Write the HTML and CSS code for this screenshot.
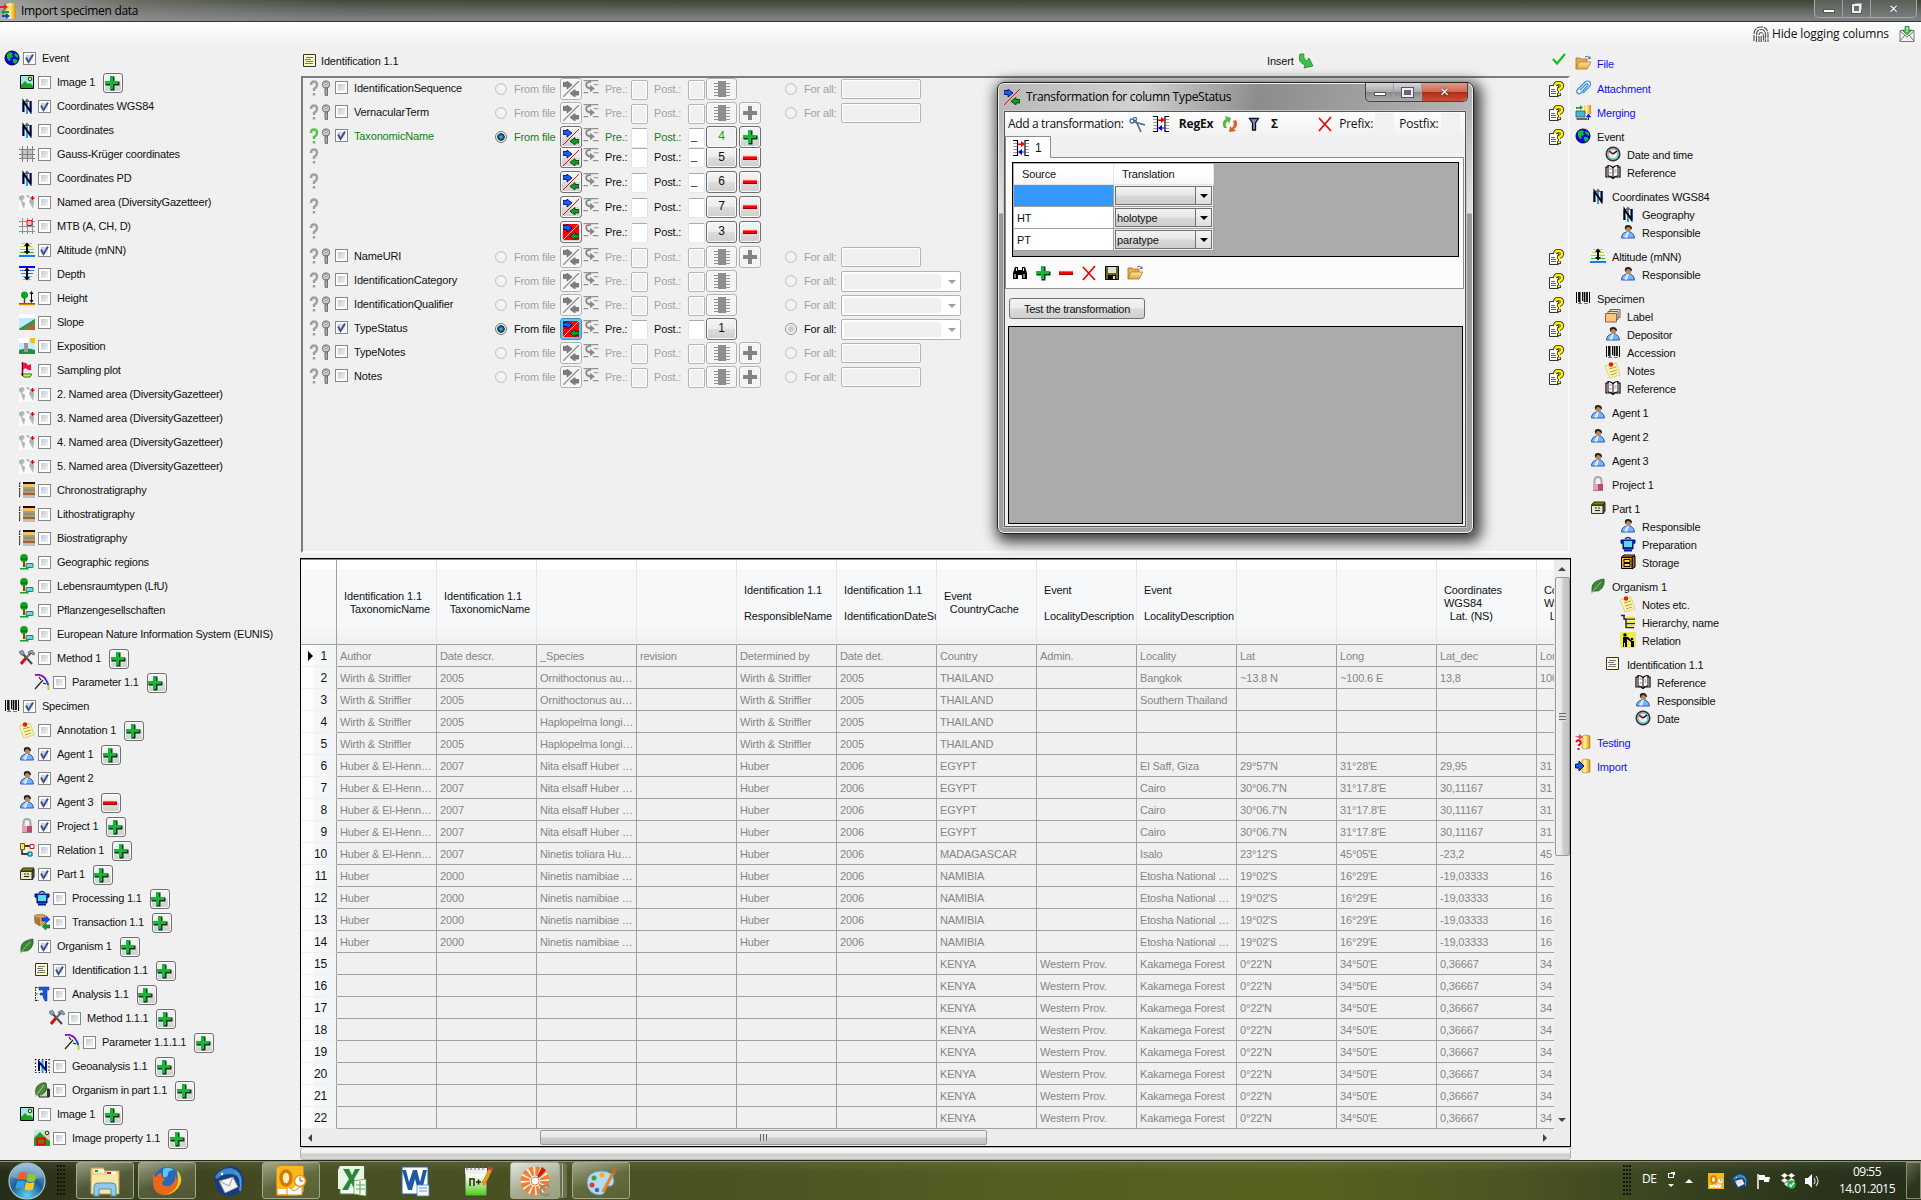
FILE: index.html
```html
<!DOCTYPE html>
<html lang="en">
<head>
<meta charset="utf-8">
<title>Import specimen data</title>
<link rel="stylesheet" href="styles.css">
</head>
<body>
<svg class="sprite" aria-hidden="true">
  <defs>
    <linearGradient id="g-gold" x1="0" x2="1"><stop offset="0" stop-color="#ffd24a"/><stop offset=".4" stop-color="#fff0a0"/><stop offset="1" stop-color="#d68a00"/></linearGradient>
    <linearGradient id="g-fold" x1="0" y1="0" x2="0" y2="1"><stop offset="0" stop-color="#ffe9a3"/><stop offset="1" stop-color="#e2a63c"/></linearGradient>
    <radialGradient id="g-orb" cx=".5" cy=".9" r=".9"><stop offset="0" stop-color="#5fd0f5"/><stop offset=".5" stop-color="#1b5e95"/><stop offset="1" stop-color="#8fb4cc"/></radialGradient>
    <linearGradient id="g-npp" x1="0" y1="0" x2="0" y2="1"><stop offset=".3" stop-color="#f8ffe8"/><stop offset="1" stop-color="#48c810"/></linearGradient>
  </defs>
  <symbol id="i-globe" viewBox="0 0 16 16"><circle cx="8" cy="8" r="7" fill="#0000e8" stroke="#000060"/><path d="M3 4l3-2 3 1-1 2 1 2-3 1 1 2-2 1-2-3zM11 3l3 2v3l-2-1-2-2zM9 9l3 0 2 2-3 3-2-2z" fill="#10c020"/></symbol>
  <symbol id="i-image" viewBox="0 0 16 16"><path d="M1.500 1.500h13v13h-13z" fill="#a0e8e8" stroke="#000"/><path d="M2 14v-3l4-4 3 3 2-1 3 3v2z" fill="#20a020"/><circle cx="11" cy="5" r="1.800" fill="#ff0" stroke="#000" stroke-width=".8"/></symbol>
  <symbol id="i-north" viewBox="0 0 16 16"><path d="M8 3v13" stroke="#20a0f0" stroke-width="2"/><path d="M5 4l3-3.500L11 4z" fill="#666"/><path d="M4.500 14V3.500l7 10V3" fill="none" stroke="#000" stroke-width="2"/><path d="M3.500 14V4M12.500 3v11" stroke="#2040d0"/></symbol>
  <symbol id="i-grid" viewBox="0 0 16 16"><path d="M2 3h12v10H2z" fill="#c4c4c4"/><path d="M3.500 0v16M8.500 0v16M13.500 0v16M0 3.500h16M0 8.500h16M0 12.500h16" stroke="#808080"/></symbol>
  <symbol id="i-map" viewBox="0 0 16 16"><path d="M0 0h16v16H0z" fill="#fafafa"/><path d="M0 2l4-1 2 2-3 4 3 2-1 6-2-4-1-4-2-2zM7 1h3l1 3-3-1zM11 5l4 1v3l-1 6-2-4-2-3z" fill="#b4b4b4"/><path d="M13.500 2v4M11.500 4h4" stroke="#e00" stroke-width="1.500"/></symbol>
  <symbol id="i-mtb" viewBox="0 0 16 16"><path d="M3.500 0v16M8.500 0v16M13.500 0v16M0 3.500h16M0 8.500h16M0 13.500h16" stroke="#909090"/><path d="M8 2.500h5v5H8z" fill="#ccc" stroke="#f00"/></symbol>
  <symbol id="i-altitude" viewBox="0 0 16 16"><path d="M3 1.500h10" stroke="#e8c020"/><path d="M2 4.500h12" stroke="#d8d820"/><path d="M1 7.500h14" stroke="#a0d820"/><path d="M1 10.500h14" stroke="#30b030"/><path d="M0 14h16" stroke="#1080f0" stroke-width="2"/><path d="M8 2v9" stroke="#000" stroke-width="2"/><path d="M5 4l3-3.500L11 4zM5 9l3 3.500L11 9z"/></symbol>
  <symbol id="i-depth" viewBox="0 0 16 16"><path d="M0 1h16" stroke="#0000f0" stroke-width="2"/><path d="M1 4.500h14M2 7.500h12" stroke="#3070f0"/><path d="M3 10.500h10M4 13.500h8" stroke="#60b8ff"/><path d="M8 3v9" stroke="#000" stroke-width="2"/><path d="M5 5l3-3.500L11 5zM5 11l3 3.500 3-3.500z"/></symbol>
  <symbol id="i-height" viewBox="0 0 16 16"><path d="M0 14h16" stroke="#b05000" stroke-width="2"/><path d="M0 14.800h16" stroke="#f0a000"/><path d="M5.500 8v5" stroke="#803000" stroke-width="1.500"/><circle cx="5.500" cy="5" r="3.500" fill="#10a030"/><path d="M12.500 3v8" stroke="#000"/><path d="M10.500 4l2-3 2 3zM10.500 10l2 3 2-3z"/></symbol>
  <symbol id="i-slope" viewBox="0 0 16 16"><path d="M0 0h16v4H0z" fill="#fff"/><path d="M0 4h16v8l-16 3z" fill="#c0e8ff"/><path d="M0 15L16 5v11H0z" fill="#a06840"/><path d="M0 15L16 5v3L4 15z" fill="#20a040"/></symbol>
  <symbol id="i-expo" viewBox="0 0 16 16"><path d="M0 0h16v16H0z" fill="#c4ecff"/><path d="M0 0h10v5H0z" fill="#fff"/><circle cx="14" cy="2.500" r="3" fill="#ffc000"/><path d="M0 12q8-3 16 0v4H0z" fill="#209040"/><path d="M5 5h4v9H5z" fill="#999"/></symbol>
  <symbol id="i-plot" viewBox="0 0 16 16"><path d="M2 12l3 3h6l2-3z" fill="#f0f020" stroke="#208020"/><path d="M3.500 0v14" stroke="#700020" stroke-width="1.500"/><path d="M4 1q3-1 4 1t4 0v6q-2 1-4-1t-4 1z" fill="#f01050"/></symbol>
  <symbol id="i-strata" viewBox="0 0 16 16"><path d="M4 0h12v2H4z" fill="#111"/><path d="M4 2h12v3H4z" fill="#f8c060"/><path d="M4 5h12v6H4z" fill="#a0a080"/><path d="M5 8h11" stroke="#808060"/><path d="M4 11h12v2.500H4z" fill="#a86030"/><path d="M4 13.500h12V16H4z" fill="#c0c0c0"/><path d="M0 1h2M0 4h1.500M0 7h2M0 10h1.500M0 13h2M.5 1v14" stroke="#222" stroke-dasharray="1.500 1"/></symbol>
  <symbol id="i-tree" viewBox="0 0 16 16"><path d="M5 6v7" stroke="#a04010" stroke-width="2"/><path d="M1 14h8l1 1.500H1z" fill="#10a020"/><circle cx="5" cy="4" r="3.900" fill="#10a020"/><path d="M2 5h6" stroke="#066010"/><path d="M7 9.500h7v4H7z" fill="#70d0e8" stroke="#10a020"/></symbol>
  <symbol id="i-tools" viewBox="0 0 16 16"><path d="M3 3l10 11" stroke="#445" stroke-width="2"/><path d="M7 8l-5 6" stroke="#d01010" stroke-width="3"/><path d="M7 8l5-5" stroke="#667" stroke-width="2"/><path d="M9 2l4-2 3 4-2 1-2-2-2 1zM0 2l2 3h3V2L3 0z" fill="#8aa0b8" stroke="#334" stroke-width=".5"/></symbol>
  <symbol id="i-param" viewBox="0 0 16 16"><path d="M1 1Q9 0 12 6" fill="none" stroke="#9010d0" stroke-width="2"/><path d="M12 6q2 3 2 5" fill="none" stroke="#2040ff" stroke-width="2"/><path d="M14.500 11v5" stroke="#c0d020" stroke-width="2"/><path d="M1 15L9 6M5 3l2 3M9 9l3 1" stroke="#222" stroke-width="1.200"/></symbol>
  <symbol id="i-barcode" viewBox="0 0 16 16"><path d="M1.500 2v11M5 2v11M7.500 2v9M14.500 2v11" stroke="#000"/><path d="M4 2v10M9.500 2v10M12 2v10" stroke="#000" stroke-width="1.700"/><path d="M3 13.500h4M9 13.500h4" stroke="#777"/></symbol>
  <symbol id="i-note" viewBox="0 0 16 16"><path d="M0 4l11-3 4 12-10 3z" fill="#fdf7a8" stroke="#c8b860" stroke-width=".6"/><path d="M4 7l7-2M5 10l7-2M6 13l6-2" stroke="#b0a050"/><circle cx="6" cy="2.500" r="2.300" fill="#e02010"/></symbol>
  <symbol id="i-agent" viewBox="0 0 16 16"><path d="M1.500 14q0-5 5-6h4q4 2 4 6z" fill="#78b4f8" stroke="#2858c0"/><path d="M4 13l3-5h2l-2 6z" fill="#d8ecff"/><circle cx="8.500" cy="5" r="2.800" fill="#c08858"/><path d="M5 5q-1-4 3-4t4 4l-1 0q-1-2-3-2t-2 3z" fill="#222"/></symbol>
  <symbol id="i-lock" viewBox="0 0 16 16"><path d="M4.500 9V5q0-4 3.500-4t3.500 4v4" fill="none" stroke="#a8a8a8" stroke-width="2"/><path d="M3 8h10v7H3z" fill="#e8a0b8"/><path d="M8 8h5v7H8z" fill="#c04868"/><path d="M3 14.500h10" stroke="#888"/></symbol>
  <symbol id="i-relation" viewBox="0 0 16 16"><path d="M3 8v4h6M6 4h5" stroke="#000" stroke-width="1.300" fill="none"/><path d="M1.500 1.500h4v6h-4z" fill="#ffe060" stroke="#905000"/><path d="M11 2.500h4v4h-4z" fill="#fff" stroke="#c02000"/><path d="M9 10h4v4H9z" fill="#60e8e8" stroke="#006080"/></symbol>
  <symbol id="i-part" viewBox="0 0 16 16"><path d="M1.500 5L4 2h11l-2 3z" fill="#808010" stroke="#303000"/><path d="M13 5l2-2v8l-2 3z" fill="#555" stroke="#222"/><path d="M1.500 5.500H13v8H1.500z" fill="#e8e8c0" stroke="#333"/><path d="M5 8h2M8 8h2M5 10.500h5" stroke="#222"/></symbol>
  <symbol id="i-pot" viewBox="0 0 16 16"><path d="M1 4h14v3l-2 1v5H3V8L1 7z" fill="#0030d0" stroke="#001060"/><path d="M4 5h8v6H4z" fill="#60d8e8"/><path d="M5 3q3-3 6 0" fill="none" stroke="#103080" stroke-width="1.500"/><path d="M4 14.500h8" stroke="#0020a0" stroke-width="2"/></symbol>
  <symbol id="i-trans" viewBox="0 0 16 16"><path d="M0 2l4-2 7 1v8l-5 3-5-3z" fill="#d0a060" stroke="#906020" stroke-width=".6"/><path d="M6 4v8l-5-3V3z" fill="#a87838"/><path d="M8 4h4V2l4 3.500L12 9V7H8z" fill="#1050f0" stroke="#001080" stroke-width=".5"/><path d="M16 11h-4V9l-4 3.500 4 3.500v-2h4z" fill="#10a030" stroke="#004010" stroke-width=".5"/></symbol>
  <symbol id="i-leaf" viewBox="0 0 16 16"><path d="M2 14Q1 5 7 3q4-2 7-2 1 5-2 9-3 4-8 3z" fill="#3c8838" stroke="#1c5020" stroke-width=".7"/><path d="M1 15.500L11 4" stroke="#98c080"/></symbol>
  <symbol id="i-ident" viewBox="0 0 16 16"><path d="M1.500 1.500h12v12h-12z" fill="#fffcc8" stroke="#333"/><path d="M4 4.500h7M3 6.500h6M4 8.500h7M3 10.500h8" stroke="#777"/></symbol>
  <symbol id="i-caliper" viewBox="0 0 16 16"><path d="M1.500 1v14M2 1.500h3M2 8h2M2 14.500h3" stroke="#222" stroke-dasharray="1.500 1"/><path d="M5 1h10v3h-2v11h-2l-2-4V9H6V7h3V4H5z" fill="#1858d8" stroke="#0a3080" stroke-width=".5"/></symbol>
  <symbol id="i-geo" viewBox="0 0 16 16"><path d="M1 1.500h15M1 14.500h15M1.500 1v14M15 1v14" stroke="#222" stroke-dasharray="1.500 2" stroke-width="1.200"/><path d="M8.500 2v13" stroke="#20a0f0" stroke-width="2"/><path d="M5 13V4l7 8V3" fill="none" stroke="#001070" stroke-width="2"/></symbol>
  <symbol id="i-orgpart" viewBox="0 0 16 16"><path d="M5 7h10v8H5z" fill="#d8d8b0" stroke="#222"/><path d="M13 7h3v8h-3z" fill="#333"/><path d="M2 13Q0 5 6 2q4-2 6-1 2 5-1 9-3 4-7 3z" fill="#4c8838" stroke="#1c5020" stroke-width=".7"/><path d="M1 15L10 3" stroke="#b0d090"/></symbol>
  <symbol id="i-imgprop" viewBox="0 0 16 16"><path d="M0 0h16v16H0z" fill="#e8c8c8"/><path d="M0 0h16v5H0z" fill="#c0e8e0"/><path d="M0 14V8l6-6 6 6 4 3v5H0z" fill="#20a020"/><circle cx="13" cy="3" r="1.800" fill="#ff0" stroke="#000" stroke-width=".8"/><path d="M3 8.500h8v6H3z" fill="#906020" stroke="#e00000" stroke-width="1.500"/></symbol>
  <symbol id="i-folder" viewBox="0 0 16 16"><path d="M1 14V3h4l1 1h6v3" fill="#e8b050" stroke="#a87020" stroke-width=".8"/><path d="M1 14L4 7h12l-4 7z" fill="url(#g-fold)" stroke="#b07820" stroke-width=".8"/><path d="M10 2q3-2 5 1" fill="none" stroke="#4a6898"/><path d="M15.500 1v3h-3z" fill="#4a6898"/></symbol>
  <symbol id="i-clip" viewBox="0 0 16 16"><path d="M5 10l6-6q2-1 2 1l-7 8q-3 2-4-.5Q1 11 3 9l7-7q3-2 5 0t-1 5l-6 6" fill="none" stroke="#3c90d8" stroke-width="1.200"/></symbol>
  <symbol id="i-merge" viewBox="0 0 16 16"><path d="M9 1h7v9H9z" fill="url(#g-gold)"/><path d="M1 7h9v6H1z" fill="#40b8d8" stroke="#445" stroke-width=".8"/><path d="M1 14h11l1 2H2z" fill="#666"/><path d="M1 5V3h4V1l3 2.500L5 6V4.500" fill="#20a020"/><path d="M13.500 16v-5M11.500 13l2-3 2 3z" fill="#1030e0" stroke="#1030e0"/></symbol>
  <symbol id="i-clock" viewBox="0 0 16 16"><circle cx="8" cy="8" r="6.800" fill="#90c8c8" stroke="#333" stroke-width="1.500"/><circle cx="8" cy="8" r="4.800" fill="#d8f4f4" stroke="#60a0a0" stroke-width=".6"/><path d="M4 5l4 3" stroke="#d00" stroke-width="1.700"/><path d="M8 8l4-3" stroke="#000" stroke-width="1.500"/></symbol>
  <symbol id="i-book" viewBox="0 0 16 16"><path d="M1 3h2V1.500q3 0 5 2 2-2 5-2V3h2v10h-5l-2 1.500L6 13H1z" fill="#fff" stroke="#000" stroke-width="1.200"/><path d="M8 3.500V13M3 3v9q3 0 5 1.500M13 3v9q-3 0-5 1.500" fill="none" stroke="#000"/><path d="M4.500 5h2M4.500 9h2" stroke="#e04040"/><path d="M9.500 6h2M9.500 8h2" stroke="#888"/></symbol>
  <symbol id="i-label" viewBox="0 0 16 16"><path d="M5 1.500h10v8H5z" fill="#e8e0c0" stroke="#666"/><path d="M3 3.500h10v8H3z" fill="#f0e0b0" stroke="#666"/><path d="M.5 5.500h11v8.500H.5z" fill="#f8c878" stroke="#866"/></symbol>
  <symbol id="i-storage" viewBox="0 0 16 16"><path d="M1.500 3L4 1h11l-2 2z" fill="#d8a060" stroke="#000"/><path d="M12 3l3-1v11l-3 2z" fill="#a06020" stroke="#000"/><path d="M1.500 3.500H12v11H1.500z" fill="#f0b020" stroke="#000"/><path d="M4 5.500h6v3H4zM4 9.500h6v3H4z" fill="#ffd860" stroke="#000"/></symbol>
  <symbol id="i-hier" viewBox="0 0 16 16"><path d="M1 1.500h4M4 2v3h11M6 5v9M6 9.500h9M6 13.500h8" fill="none" stroke="#222" stroke-width="1.400"/><path d="M6 3.500h9M7 8h8M7 12h7" stroke="#f8f000" stroke-width="1.800"/></symbol>
  <symbol id="i-people" viewBox="0 0 16 16"><rect width="16" height="16" rx="2" fill="#f0e850"/><circle cx="5" cy="3" r="1.700"/><path d="M3 5h5l4 4-1 1-4-3v8H5v-4H4v4H3z"/><circle cx="12" cy="7" r="1.300"/><path d="M11 9h3v6h-3z"/></symbol>
  <symbol id="i-test" viewBox="0 0 16 16"><path d="M7 2q4-2 8 0v12q-4 2-8 0z" fill="url(#g-gold)" stroke="#b07000" stroke-width=".5"/><path d="M0 2h4V0l4 3-4 3V4" fill="#f04060"/><path d="M1 8q2-3 4-1t-1 4v1M3.500 14v2" stroke="#e00020" stroke-width="2" fill="none"/></symbol>
  <symbol id="i-import" viewBox="0 0 16 16"><path d="M7 2q4-2 8 0v12q-4 2-8 0z" fill="url(#g-gold)" stroke="#b07000" stroke-width=".5"/><path d="M.5 6H4V3l5 5-5 5v-3H.5z" fill="#1060e8" stroke="#001060"/></symbol>
  <symbol id="i-app" viewBox="0 0 16 16"><path d="M6 1q5-2 10 0v14q-5 2-10 0z" fill="url(#g-gold)"/><path d="M0 3h4V1l4 3-4 3V5H0z" fill="#e02020"/><path d="M9 8H4V6L1 9l3 3v-2h5z" fill="#20a020"/><path d="M2 12h4v-2l4 3-4 3v-2H2z" fill="#1040e0"/></symbol>
  <symbol id="i-help" viewBox="0 0 16 16"><path d="M1.500 4.500h9v11h-9z" fill="#fff" stroke="#333"/><path d="M3 8.500h4M3 10.500h5M3 12.500h5" stroke="#666"/><path d="M7 5q0-3 3.500-3T14 5q0 2-3 3v2M11 12v3" fill="none" stroke="#222" stroke-width="4"/><path d="M7 5q0-3 3.500-3T14 5q0 2-3 3v2M11 12.300v2" fill="none" stroke="#ffee00" stroke-width="2.600"/></symbol>
  <symbol id="i-quest" viewBox="0 0 10 16"><path d="M2 5q0-3.500 3-3.500T8 5q0 2-3 4v2M5 13v2.500" fill="none" stroke="currentColor" stroke-width="2.500"/></symbol>
  <symbol id="i-key" viewBox="0 0 10 16"><circle cx="5" cy="4.500" r="3.700" fill="#c8c8c8" stroke="#707070"/><circle cx="5" cy="3.500" r="1.200" fill="#fff" stroke="#777" stroke-width=".7"/><path d="M4 8h2.500v7.500L5 16l-1-1z" fill="#aaa" stroke="#666" stroke-width=".9"/></symbol>
  <symbol id="i-tf" viewBox="0 0 16 16"><path d="M0 1.500h4V0l5 4-5 4V5.500H0z" fill="#1060ff" stroke="#000050" stroke-width=".8"/><path d="M16 10.500h-4V8.500l-5 3.800 5 3.700v-2h4z" fill="#10a020" stroke="#003000" stroke-width=".8"/><path d="M0 16L16 0" stroke="#f00"/></symbol>
  <symbol id="i-tfr" viewBox="0 0 16 16"><path d="M0 0h16v16H0z" fill="#f00"/><path d="M0 1.500h4V0l5 4-5 4V5.500H0z" fill="#1060ff" stroke="#000050" stroke-width=".8"/><path d="M16 10.500h-4V8.500l-5 3.800 5 3.700v-2h4z" fill="#10a020" stroke="#003000" stroke-width=".8"/><path d="M0 16L16 0" stroke="#ffc0c0"/></symbol>
  <symbol id="i-tfg" viewBox="0 0 16 16"><path d="M0 1.500h4V0l5 4-5 4V5.500H0zM16 10.500h-4V8.500l-5 3.800 5 3.700v-2h4z" fill="#7c7c7c" stroke="#707070" stroke-width=".8"/><path d="M0 16L16 0" stroke="#888" stroke-width="1.200"/></symbol>
  <symbol id="i-split" viewBox="0 0 16 16"><path d="M0 .7h16M0 13.500h5M10 13.500h6M11 5h5" stroke="#909090" stroke-width="1.200"/><path d="M8 2Q2 2 3 6q1 3 5 3" fill="none" stroke="#888" stroke-width="2"/><path d="M7 5l5 4-5 4z" fill="#888"/></symbol>
  <symbol id="i-comb" viewBox="0 0 16 16"><path d="M0 2.500h16M0 5.500h16M0 8.500h16M0 11.500h16M0 14.500h16" stroke="#909090"/><path d="M4 0h8v16H4z" fill="#8e8e8e"/></symbol>
  <symbol id="i-plus" viewBox="0 0 16 16"><path d="M6.500 1.500h4v5h5v4h-5v5h-4v-5h-5v-4h5z" fill="#063c10"/><path d="M6 1h3v5h5v3H9v5H6V9H1V6h5z" fill="#10b83c"/></symbol>
  <symbol id="i-plusg" viewBox="0 0 16 16"><path d="M6 1h4v5h5v4h-5v5H6v-5H1V6h5z" fill="#848484"/></symbol>
  <symbol id="i-minus" viewBox="0 0 16 16"><path d="M1 6h14v4H1z" fill="#900"/><path d="M1 6h14v3H1z" fill="#f00"/><path d="M1 6.300h14" stroke="#ff9a9a" stroke-width=".7"/></symbol>
  <symbol id="i-insert" viewBox="0 0 16 16"><path d="M2 1Q-1 9 7 12l-1 3 9-2-4-8-2 3Q5 6 6 1z" fill="#40c048" stroke="#108020" stroke-width=".7"/></symbol>
  <symbol id="i-ok" viewBox="0 0 16 16"><path d="M2 8l4 4.500L14 3" fill="none" stroke="#10c020" stroke-width="2.200"/></symbol>
  <symbol id="i-finger" viewBox="0 0 16 16"><path d="M1 15V9q0-8 7-8t7 8v7M3.500 16V9q0-5.500 4.500-5.500T12.500 9v7M6 16v-6q0-3.500 2-3.500t2.500 3.500v6M8.200 16v-6" fill="none" stroke="#555" stroke-width="1.200" stroke-dasharray="6 .8"/></symbol>
  <symbol id="i-mail" viewBox="0 0 16 16"><path d="M1 4.500h14v11H1z" fill="#f4f4f4" stroke="#777"/><path d="M1 5l7 6 7-6M1 15l5-6M15 15l-5-6" fill="none" stroke="#777"/><path d="M6 0h4v4h3l-5 5-5-5h3z" fill="#40b850" stroke="#108020" stroke-width=".6"/><path d="M8 1v5" stroke="#fff"/></symbol>
  <symbol id="i-scissors" viewBox="0 0 16 16"><circle cx="3" cy="5" r="2" fill="none" stroke="#4a68a0" stroke-width="1.400"/><circle cx="6" cy="3" r="1.600" fill="none" stroke="#4a68a0" stroke-width="1.200"/><path d="M5 6l11 3M7 5l5 11" stroke="#566c98" stroke-width="1.700"/></symbol>
  <symbol id="i-transl" viewBox="0 0 16 16"><path d="M0 .5h4.500v15H0M16 .5h-4v15h4" fill="none" stroke="#000" stroke-width="1.200"/><path d="M0 3.500h4M0 6.500h4M0 9.500h4M0 12.500h4M13 3.500h3M13 6.500h3M13 9.500h3M13 12.500h3" stroke="#999"/><path d="M5 3.500h3V1l4 3-4 3V5H5z" fill="#f00000"/><path d="M12 11.500H9V9l-4 3 4 3v-2.500h3z" fill="#0000f0"/></symbol>
  <symbol id="i-recycle" viewBox="0 0 16 16"><path d="M2 12Q-1 5 4 3L3 0l6 2-2 6-1-3Q2 7 5 12z" fill="#50b840"/><path d="M14 4q3 6-2 9l2 2-7 1 1-6 2 2q3-3 1-7z" fill="#e06020"/></symbol>
  <symbol id="i-filter" viewBox="0 0 16 16"><path d="M3.500 2.500h9L9.500 7v7h-3V7z" fill="#7890d8" stroke="#111" stroke-width="1.300"/></symbol>
  <symbol id="i-x" viewBox="0 0 16 16"><path d="M2 2l12 13M14 1L2 15" stroke="#f00000" stroke-width="1.700"/></symbol>
  <symbol id="i-bino" viewBox="0 0 16 16"><path d="M3 2h3v3h4V2h3l2 6v6h-5v-4H6v4H1V8z" fill="#000"/><path d="M3 9v4M12 9v4M4.500 3v3M11.500 3v3" stroke="#ddd" stroke-width="1.200"/></symbol>
  <symbol id="i-save" viewBox="0 0 16 16"><path d="M1.500 1.500h13v13h-13z" fill="#6c6c00" stroke="#000"/><path d="M4 2h8v6H4z" fill="#e0e0e0"/><path d="M4 10h8v5H4z" fill="#000"/><path d="M9 11h2v3H9z" fill="#ddd"/></symbol>
  <symbol id="i-tick" viewBox="0 0 13 13"><path d="M3 5.500l2.500 4.500L10 2.500" fill="none" stroke="#3d5296" stroke-width="2"/></symbol>
  <symbol id="t-start" viewBox="0 0 40 40"><circle cx="20" cy="20" r="18" fill="url(#g-orb)" stroke="#a8c8d8" stroke-width="1.200"/><path d="M4 16Q8 3 20 3t16 13q-16 6-32 0z" fill="#fff" opacity=".25"/><path d="M12 12q4-2 8 0l-1.500 7q-4-2-8 0z" fill="#f06028"/><path d="M21 12.500q4 2 8.500 0L28 20q-4 2-8.500 0z" fill="#8ac838"/><path d="M10 20.500q4-2 8 0l-1.500 7q-4-2-8 0z" fill="#38a0e8"/><path d="M19 21q4 2 8.500 0L26 28.500q-4 2-8.500 0z" fill="#fcc820"/></symbol>
  <symbol id="t-explorer" viewBox="0 0 32 32"><path d="M2 3h12l2 3h14v23H2z" fill="#f0d888" stroke="#c8a850"/><path d="M5 6h10M18 8h9" stroke="#fff" stroke-width="3"/><path d="M6 5h3v2H6z" fill="#18a030"/><path d="M18 7h4v2h-4z" fill="#e02020"/><path d="M3 10h26v18H3z" fill="#f8e8a8"/><path d="M5 31V22q0-4 4-4h14q4 0 4 4v9h-5v-7H10v7z" fill="#90cce8" stroke="#5090b8"/></symbol>
  <symbol id="t-firefox" viewBox="0 0 32 32"><circle cx="16" cy="15" r="13" fill="#2868b8"/><path d="M12 4q6-3 11 1-6 0-6 4t-5 3z" fill="#60c8f0"/><path d="M2 8q1 4 3 4 2-4 6-4-2 4 3 6-3 3-3 5 4 4 9 1 5-3 4-9 7 8 0 15-5 5-12 4Q1 28 2 14z" fill="#e86818"/><path d="M26 5q8 10 1 18-5 6-12 6 12-3 12-14z" fill="#fcc828"/></symbol>
  <symbol id="t-thunder" viewBox="0 0 32 32"><path d="M1 12Q5 4 10 4q3-3 9-3 11 3 12 15-1 13-13 15Q5 31 2 20z" fill="#183c80"/><path d="M2 12Q7 3 18 3q11 3 11 14-4-8-12-8T4 14z" fill="#3c88cc"/><path d="M22 6q8 8 5 20" fill="none" stroke="#4c98d8" stroke-width="2"/><path d="M6 16l14-4 5 10-13 6z" fill="#f4f4f4" stroke="#888" stroke-width=".7"/><path d="M6 16l10 5 4-9" fill="none" stroke="#999"/><circle cx="9" cy="9" r="1.200" fill="#fff"/></symbol>
  <symbol id="t-outlook" viewBox="0 0 32 32"><path d="M2 2h26v24L22 30H2z" fill="#fff" stroke="#e89810" stroke-width="1.500"/><path d="M5 1h23v13L17 24H2V4z" fill="#f8b820"/><ellipse cx="11" cy="13" rx="5" ry="7" fill="#fff0c0" stroke="#d87800" stroke-width="3.500"/><circle cx="25" cy="16" r="5.500" fill="#fff" stroke="#e89810" stroke-width="1.500"/><path d="M25 12v4h3" fill="none" stroke="#a05000"/><path d="M12 21l7 5 8-5v9H12z" fill="#fff" stroke="#d89020"/></symbol>
  <symbol id="t-excel" viewBox="0 0 32 32"><path d="M3 2h24v27H3z" fill="#fff" stroke="#38903c"/><path d="M1 5l2-4h24v22L1 24z" fill="#e8f4e4"/><path d="M6 4h6l3 6 3-6h5l-6 10 7 11h-6l-4-7-3 7H5l7-11z" fill="#288838"/><path d="M17 16l12-2v17l-12-2z" fill="#f4fff0" stroke="#60a060" stroke-width=".8"/><path d="M19 20h9M19 24h9M23 16v13" stroke="#60a060"/></symbol>
  <symbol id="t-word" viewBox="0 0 32 32"><path d="M3 2h26v27H3z" fill="#fff" stroke="#2c60a8"/><path d="M3 5h4l3 12 4-12h4l3 12 3-12h4l-5 20h-4l-3-11-3 11H9z" fill="#2058a8"/><path d="M18 20h12v11H18z" fill="#f4f8ff" stroke="#5080b8" stroke-width=".8"/><path d="M20 23h8M20 26h8" stroke="#7098c8"/></symbol>
  <symbol id="t-npp" viewBox="0 0 32 32"><path d="M4 3h22v28H4z" fill="url(#g-npp)" stroke="#444"/><path d="M4 3h22v6H4z" fill="#eee"/><path d="M6 1v4M10 1v4M14 1v4M18 1v4M22 1v4" stroke="#666"/><path d="M9 21v-7h4v7M15 17h5M17.500 14.500v5M21 17h5M23.500 14.500v5" fill="none" stroke="#222" stroke-width="1.500"/><path d="M30 3l-8 17" stroke="#e09820" stroke-width="4"/><path d="M30 2l-1 3" stroke="#d04030" stroke-width="4"/></symbol>
  <symbol id="t-div" viewBox="0 0 32 32"><circle cx="16" cy="16" r="14" fill="#fff" opacity=".8"/><circle cx="16" cy="16" r="10" fill="none" stroke="#f08030" stroke-width="9" stroke-dasharray="3.500 1.735"/><circle cx="16" cy="16" r="4" fill="#fff" stroke="#f08030"/><path d="M18 11l5-9 4 3-7 8z" fill="#c82010"/><path d="M30 22a5 5 0 1 0 0 7" fill="none" stroke="#888" stroke-width="2"/></symbol>
  <symbol id="t-paint" viewBox="0 0 32 32"><path d="M2 18Q2 7 15 6t14 10q0 6-6 5-4 0-3 4 0 5-6 5Q3 29 2 18z" fill="#b8d8ec" stroke="#6898b8"/><circle cx="9" cy="13" r="2.500" fill="#38a838"/><circle cx="17" cy="10" r="2.500" fill="#f0b020"/><circle cx="7" cy="20" r="2.500" fill="#d83838"/><circle cx="12" cy="25" r="2.300" fill="#3868c8"/><path d="M18 27L29 6" stroke="#d88830" stroke-width="3"/><path d="M27 8l1-7 4 3-2 6z" fill="#b07030"/></symbol>
  <symbol id="t-flag" viewBox="0 0 16 16"><path d="M2 1v15" stroke="#fff" stroke-width="1.500"/><path d="M3 2h6v2h5l-1 5H8V7H3z" fill="#fff"/></symbol>
  <symbol id="t-drop" viewBox="0 0 16 16"><path d="M4.500 0L8 2.500 4.500 5 1 2.500zM11.500 0L15 2.500 11.500 5 8 2.500zM4.500 5L8 7.500 4.500 10 1 7.500zM11.500 5L15 7.500 11.500 10 8 7.500zM4 11l4-2.500L12 11l-4 3z" fill="#f4f4f4"/><circle cx="11.500" cy="11.500" r="4.300" fill="#20b040"/><path d="M9.500 11.500l1.500 2 3-4" fill="none" stroke="#fff" stroke-width="1.300"/></symbol>
  <symbol id="t-sound" viewBox="0 0 16 16"><path d="M1 5h3l4-4v14l-4-4H1z" fill="#fff"/><path d="M10 5q2 3 0 6M12 3q4 5 0 10" fill="none" stroke="#ddd" stroke-width="1.100"/></symbol>
</svg>

<header class="titlebar">
  <svg class="icon"><use href="#i-app"/></svg>
  <span class="titlebar-text">Import specimen data</span>
  <div class="winbtns">
    <span class="wb"><i class="g-min"></i></span><span class="wb"><i class="g-rest"></i></span><span class="wb wide">✕</span>
  </div>
</header>
<div class="toolbar">
  <svg class="icon"><use href="#i-finger"/></svg>
  <span>Hide logging columns</span>
  <svg class="icon"><use href="#i-mail"/></svg>
</div>

<div class="main">
  <nav class="tree" id="tree"></nav>

  <section class="center">
    <div class="center-head">
      <svg class="icon"><use href="#i-ident"/></svg>
      <span class="head-title">Identification 1.1</span>
      <span class="head-insert">Insert</span>
      <svg class="icon"><use href="#i-insert"/></svg>
      <svg class="icon head-ok"><use href="#i-ok"/></svg>
    </div>
    <div class="attrs" id="attrs"></div>
    <div class="gridbox">
      <div class="gridtop">
        <div class="gridview"><table class="data" id="data"></table></div>
        <div class="vscroll"><i class="arr up"></i><div class="vthumb"><i></i></div><i class="arr down"></i></div>
      </div>
      <div class="hscroll"><i class="arr left"></i><div class="hthumb"><i></i></div><i class="arr right"></i></div>
    </div>
    <div class="progress"></div>
  </section>

  <aside class="steps" id="steps"></aside>
</div>

<footer class="taskbar">
  <svg class="start"><use href="#t-start"/></svg>
  <i class="grip"></i>
  <div class="tasks">
    <span class="task on"><svg><use href="#t-explorer"/></svg></span>
    <span class="task on"><svg><use href="#t-firefox"/></svg></span>
    <span class="task"><svg><use href="#t-thunder"/></svg></span>
    <span class="task on"><svg><use href="#t-outlook"/></svg></span>
    <span class="task"><svg><use href="#t-excel"/></svg></span>
    <span class="task"><svg><use href="#t-word"/></svg></span>
    <span class="task"><svg><use href="#t-npp"/></svg></span>
    <span class="task on active"><svg><use href="#t-div"/></svg></span>
    <span class="task on"><svg><use href="#t-paint"/></svg></span>
  </div>
  <div class="tray">
    <i class="grip"></i>
    <span class="lang">DE</span>
    <span class="langbtn"><i class="g-rest"></i><b></b></span>
    <b class="more"></b>
    <svg class="icon tile"><use href="#t-outlook"/></svg>
    <svg class="icon"><use href="#t-thunder"/></svg>
    <svg class="icon"><use href="#t-flag"/></svg>
    <svg class="icon"><use href="#t-drop"/></svg>
    <svg class="icon"><use href="#t-sound"/></svg>
    <span class="clock">09:55<br>14.01.2015</span>
    <span class="desk"></span>
  </div>
</footer>

<div class="dialog">
  <div class="dlg-title">
    <svg class="icon"><use href="#i-tf"/></svg>
    <span>Transformation for column TypeStatus</span>
    <div class="winbtns dlg-btns">
      <span class="wb"><i class="g-min"></i></span><span class="wb"><i class="g-max"></i></span><span class="wb wide red">✕</span>
    </div>
  </div>
  <div class="dlg-body">
    <div class="dlg-tools">
      <span class="t-add">Add a transformation:</span>
      <svg class="icon"><use href="#i-scissors"/></svg>
      <svg class="icon"><use href="#i-transl"/></svg>
      <b class="t-regex">RegEx</b>
      <svg class="icon"><use href="#i-recycle"/></svg>
      <svg class="icon"><use href="#i-filter"/></svg>
      <b class="t-sigma">Σ</b>
      <svg class="icon"><use href="#i-x"/></svg>
      <span class="t-prefix">Prefix:</span><i class="t-box"></i>
      <span class="t-postfix">Postfix:</span><i class="t-box"></i>
    </div>
    <div class="tab"><svg class="icon"><use href="#i-transl"/></svg><span>1</span></div>
    <div class="tabpage">
      <div class="maps">
        <div class="map head"><span>Source</span><span>Translation</span></div>
        <div class="map sel"><span></span><span class="combo"><em></em><b></b></span></div>
        <div class="map"><span>HT</span><span class="combo"><em>holotype</em><b></b></span></div>
        <div class="map"><span>PT</span><span class="combo"><em>paratype</em><b></b></span></div>
      </div>
      <div class="maptools">
        <svg class="icon"><use href="#i-bino"/></svg>
        <svg class="icon"><use href="#i-plus"/></svg>
        <svg class="icon"><use href="#i-minus"/></svg>
        <svg class="icon"><use href="#i-x"/></svg>
        <svg class="icon"><use href="#i-save"/></svg>
        <svg class="icon"><use href="#i-folder"/></svg>
      </div>
    </div>
    <button class="testbtn">Test the transformation</button>
    <div class="result"></div>
  </div>
</div>
<script src="app.js"></script>
</body>
</html>
```
FILE: styles.css
```css
* { box-sizing: border-box; }
body { margin: 0; width: 1921px; height: 1200px; overflow: hidden; background: #f0f0f0; color: #111; font: 11px/14px "Liberation Sans", Arial, sans-serif; letter-spacing: -.15px; position: relative; }
svg { display: block; overflow: visible; }
.sprite { position: absolute; width: 0; height: 0; }
.icon { width: 16px; height: 16px; flex: none; }

.titlebar { height: 22px; display: flex; align-items: center; background: linear-gradient(90deg, rgba(190,190,190,.75) 0, rgba(150,150,150,.45) 140px, rgba(120,120,120,.1) 340px, rgba(90,90,90,0) 700px), linear-gradient(#3c4434, #636760 50%, #7d8082 90%); border-bottom: 1px solid #333; color: #000; }
.titlebar-text { font: 12px/16px "Open Sans", "Noto Sans", sans-serif; letter-spacing: -.3px; margin: 0 0 0 5px; flex: 1; }
.winbtns { display: flex; align-self: flex-start; width: 103px; height: 18px; margin-right: 4px; border: 1px solid #a8aaac; border-top: 0; border-radius: 0 0 5px 5px; background: rgba(120,124,126,.5); }
.wb { width: 28px; display: flex; align-items: center; justify-content: center; border-right: 1px solid #a0a2a4; color: #fff; font: bold 12px/14px "DejaVu Sans", sans-serif; text-shadow: 0 0 1px #222, 0 0 1px #222; }
.wb.wide { flex: 1; border: 0; }
.g-min { width: 12px; height: 4px; margin-top: 4px; background: #fff; border: 1px solid #555; }
.g-max { width: 11px; height: 9px; border: 2px solid #eee; outline: 1px solid #556; background: #667; }
.g-rest { width: 9px; height: 9px; border: 2px solid #eee; box-shadow: 2px -2px 0 -1px #aaa, 0 0 0 1px #555; }

.toolbar { height: 24px; display: flex; align-items: center; justify-content: flex-end; padding-right: 6px; background: linear-gradient(#fefefe, #f7f7f7 60%, #f0f0f0); font: 12px/16px "Open Sans", "Noto Sans", sans-serif; }
.toolbar span { width: 127px; margin-left: 3px; letter-spacing: -.15px; white-space: nowrap; }

.main { height: 1114px; display: flex; }
.tree { width: 300px; flex: none; letter-spacing: -.23px; }
.tree-row { height: 24px; display: flex; align-items: center; }
.tree-row .icon { margin-right: 3px; }
.tree-row .cb { margin: 1px 6px 0 0; }
.tree-row .btn { margin: 2px 0 0 8px; }
.cb { width: 13px; height: 13px; flex: none; border: 1px solid #868787; background: #fff; padding: 2px; display: block; position: relative; }
.cb::before { content: ""; display: block; width: 7px; height: 7px; background: linear-gradient(135deg, #c4c8d0, #f2f2f4); }
.cb svg { position: absolute; left: -1px; top: -1px; width: 13px; height: 13px; }
.btn { width: 20px; height: 20px; flex: none; border: 1px solid #707070; border-radius: 3px; background: linear-gradient(#f4f4f4, #ececec 48%, #dcdcdc 52%, #cfcfcf); box-shadow: inset 0 0 0 1px #fafafa; display: flex; align-items: center; justify-content: center; }

.center { width: 1271px; flex: none; display: flex; flex-direction: column; }
.center-head { height: 30px; display: flex; align-items: center; padding: 0 4px 0 2px; }
.head-title { margin-left: 3px; width: 946px; }
.head-insert { width: 31px; }
.head-ok { margin: -4px 0 0 auto; }
.attrs { height: 477px; margin: 0 1px 5px 1px; border: 2px solid; border-color: #7c7c7c #fafafa #fafafa #7c7c7c; padding-left: 6px; }
.attr { height: 24px; display: grid; align-items: start; grid-template-columns: 12px 14px 19px 141px 19px 46px 23px 22px 26px 23px 34px 18px 33px 46px 19px 37px 707px 16px; color: #a2a2a2; white-space: nowrap; }
.attr.tax { height: 22px; }
.attr.sub { height: 25px; }
.attr.sub1 { height: 23px; }
.attr.sub1 .btn { height: 20px; border-top: 0; border-radius: 0 0 3px 3px; }
.attr.sub1 .q, .attr.sub1 .split { margin-top: 0; }
.attr.sub1 .t2 { padding-top: 2px; }
.attr.sub1 .tin { margin-top: 0; }
.attr.on { color: #111; }
.attr.green { color: #108010; }
.attr .q { width: 10px; height: 16px; margin-top: 2px; color: #a0a0a0; }
.attr.green .q { color: #58c050; }
.attr .cb { margin-top: 3px; }
.attr .name { padding-top: 3px; color: #111; }
.attr.green .name { color: #108010; }
.attr .t1 { padding-top: 4px; }
.attr .t2 { padding-top: 4px; }
.attr .btn { width: 22px; height: 22px; }
.attr .btn.num { width: 31px; color: #111; font-size: 12px; line-height: 13px; padding-bottom: 1px; }
.attr .btn.green { color: #20a020; background: #f1f1f1; }
.attr .btn.off { border-color: #adb2b5; background: #f4f4f4; }
.attr .btn.focus { border-color: #3c8fc0; box-shadow: inset 0 0 0 2px #50c8f0; }
.radio { width: 12px; height: 12px; margin-top: 5px; border: 1px solid #c4c4c4; border-radius: 50%; background: radial-gradient(#f4f4f4 40%, #e2e2e2); }
.radio.en { border-color: #8e8f8f; background: radial-gradient(#c8ccd4 30%, #fff 70%); }
.radio.sel { border-color: #777; background: radial-gradient(#5cc8f0 0, #156a94 28%, #0a3048 48%, #eee 58%); }
.split { height: 15px; margin-top: 2px; }
.tin { height: 20px; width: 17px; margin-top: 2px; border: 1px solid #b4b4b4; border-radius: 2px; box-shadow: inset 0 0 0 1px #fff; }
.attr.on .tin { background: #fff; border-color: #ababab #e2e3ea #e3e9ef #e2e3ea; color: #111; padding-left: 2px; }
.big { width: 80px; height: 20px; margin-top: 1px; border: 1px solid #b4b4b4; border-radius: 2px; box-shadow: inset 0 0 0 1px #fff; }
.big.cmb { width: 120px; height: 21px; background: linear-gradient(#f0f0f0, #f0f0f0) 2px 2px / 97px 15px no-repeat #fff; display: flex; align-items: center; justify-content: flex-end; padding-right: 4px; }
.big.cmb::after { content: ""; border: 4px solid transparent; border-top-color: #a0a0a0; border-bottom: 0; }
.attr .help { margin-top: 3px; }

.gridbox { height: 589px; border: 1px solid #000; display: flex; flex-direction: column; background: #f0f0f0; }
.gridtop { height: 570px; display: flex; border-top: 1px solid #888; }
.gridview { width: 1253px; overflow: hidden; }
.data { table-layout: fixed; width: 1335px; border-spacing: 0; }
.data th, .data td { padding: 0; text-align: left; font-weight: normal; white-space: pre; overflow: hidden; }
.data thead th { height: 85px; border-right: 1px solid #e4e6e8; border-bottom: 1px solid #a0a0a0; background: linear-gradient(#fff 9px, #f6f8fa 10px, #f6f8fa 65px, #f0f1f2 82px); padding: 2px 0 0 7px; line-height: 13px; vertical-align: middle; letter-spacing: -.12px; }
.data thead th:first-child { border-right-color: #a0a0a0; }
.data tbody th { line-height: 20px; padding-top: 1px; border-right: 1px solid #a0a0a0; border-bottom: 1px solid #f0f0f0; background: linear-gradient(90deg, #fdfdfd 30%, #f5f7f9 40%, #f2f4f6); text-align: right; padding-right: 9px; font-size: 12px; }
.data td { line-height: 20px; color: #868686; border-right: 1px solid #a0a0a0; border-bottom: 1px solid #a0a0a0; padding: 1px 2px 0 3px; text-overflow: ellipsis; }
.data .cur::before { content: ""; display: inline-block; border: 5px solid transparent; border-left-color: #000; border-right: 0; vertical-align: -1px; margin-right: 7px; }
.vscroll { width: 16px; background: #ececec; display: flex; flex-direction: column; align-items: center; }
.arr { width: 0; height: 0; border: 4px solid transparent; flex: none; }
.arr.up { border-bottom-color: #444; border-top: 0; margin: 7px 0 6px; }
.arr.down { border-top-color: #444; border-bottom: 0; margin-top: auto; margin-bottom: 7px; }
.arr.left { border-right-color: #444; border-left: 0; margin-left: 7px; }
.arr.right { border-left-color: #444; border-right: 0; margin-left: auto; margin-right: 23px; }
.vthumb { width: 15px; height: 279px; border: 1px solid #999; border-radius: 2px; background: linear-gradient(90deg, #f2f2f2, #e6e6e6 45%, #cdcdd0 55%, #c2c2c4); display: flex; align-items: center; justify-content: center; }
.vthumb i { width: 7px; height: 8px; background: repeating-linear-gradient(#666 0 1px, #ddd 1px 3px); }
.hscroll { height: 17px; background: #ececec; display: flex; align-items: center; }
.hthumb { width: 447px; height: 15px; margin-left: 228px; border: 1px solid #999; border-radius: 2px; background: linear-gradient(#f2f2f2, #e6e6e6 45%, #cdcdd0 55%, #c2c2c4); display: flex; align-items: center; justify-content: center; }
.hthumb i { width: 8px; height: 7px; background: repeating-linear-gradient(90deg, #666 0 1px, #ddd 1px 3px); }
.progress { height: 13px; border: 1px solid #b2b2b2; border-radius: 3px; background: linear-gradient(#fcfcfc, #eee 45%, #cdcdcd 55%, #d8d8d8); }

.steps { padding: 9px 0 0 4px; letter-spacing: -.2px; }
.step { height: 18px; display: flex; align-items: center; white-space: nowrap; }
.step.main-step { margin-top: 6px; }
.step:first-child { margin: 0 0 7px; }
.step .icon { margin: -3px 6px 0 0; }
.step.link { color: #1010f8; }

.taskbar { height: 40px; display: flex; align-items: center; color: #fff; border-top: 1px solid #23280f; box-shadow: inset 0 1px 0 #8e9478; background: linear-gradient(rgba(255,255,255,.08), rgba(0,0,0,0) 30%), linear-gradient(90deg, #262d18 0, #333a1c 100px, #484f22 300px, #4a5222 700px, #545d22 1000px, #586220 1300px, #4d5622 1500px, #3d4720 1640px, #2c361c 1800px, #242e1a); }
.start { width: 40px; height: 40px; margin-left: 7px; }
.grip { width: 8px; height: 32px; margin-left: 10px; background: radial-gradient(circle at 1px 1px, #10140a 1px, transparent 1.100px) 0 0 / 3px 4px; }
.tasks { display: flex; margin-left: 11px; gap: 4px; align-self: stretch; }
.task { width: 58px; display: flex; align-items: center; justify-content: center; margin: 1px 0; border: 1px solid transparent; border-radius: 3px; }
.task svg { width: 32px; height: 32px; }
.task.on { border-color: #a2a78e; background: linear-gradient(160deg, rgba(230,235,215,.55), rgba(180,185,150,.25) 50%, rgba(150,160,110,.2)); }
.task.active { width: 50px; background: linear-gradient(160deg, #e4e6dc, #a8ac92 60%, #96a07a); box-shadow: 3px 0 0 -1px #6a7150, 4px 0 0 -1px #b4b8a4, 8px 0 0 -1px #6a7150; margin-right: 8px; }
.tray { margin-left: auto; display: flex; align-items: center; height: 100%; }
.tray .grip { margin: 0 11px 0 0; }
.lang { width: 25px; font: 12px/16px "Open Sans", sans-serif; letter-spacing: -.4px; margin-top: -3px; }
.langbtn { width: 18px; display: flex; flex-direction: column; gap: 6px; margin-top: -2px; }
.langbtn .g-rest { width: 6px; height: 5px; border-width: 1px; margin-left: 1px; box-shadow: 2px -2px 0 -1px #fff; }
.langbtn b { width: 0; border: 3px solid transparent; border-top-color: #fff; border-bottom: 0; margin-left: 1px; }
.more { border: 4px solid transparent; border-bottom-color: #fff; border-top: 0; margin-right: 15px; }
.tray .icon { margin-right: 8px; }
.tray .icon.tile { background: #f8b820; }
.clock { width: 78px; text-align: center; font: 12px/17px "Open Sans", sans-serif; letter-spacing: -.5px; margin-top: -1px; }
.desk { width: 15px; height: 37px; margin-left: 0; border: 1px solid #8a8f78; background: linear-gradient(135deg, #60684c, #2c361c 60%); }

.dialog { position: absolute; left: 997px; top: 82px; width: 477px; height: 452px; padding: 0 7px 6px 6px; border: 1px solid #222; border-radius: 7px; background: linear-gradient(100deg, #b8b8b8, #d2d2d2 30%, #8c8c8c 55%, #b6b6b6) 0 0 / 100% 30px no-repeat, linear-gradient(#aaa, #e2e2e2 130px, #999 131px, #a0a0a0); box-shadow: inset 0 0 0 1px #f0f0f0, 3px 4px 14px 4px rgba(0,0,0,.75); }
.dlg-title { height: 28px; display: flex; align-items: center; font: 12px/16px "Open Sans", "Noto Sans", sans-serif; letter-spacing: -.3px; color: #000; position: relative; }
.dlg-title > span { margin: 0 0 0 6px; }
.dlg-btns { position: absolute; right: -2px; top: 0; margin: 0; height: 19px; border-color: #444; background: linear-gradient(#d8d8d8, #a8a8a8 50%, #8a8a8a 51%, #aaa); letter-spacing: 0; }
.wb.red { background: linear-gradient(#e09a8c, #cc6650 50%, #b02c14 51%, #c85038); border-radius: 0 0 5px 0; }
.dlg-body { height: 416px; border: 1px solid #555; outline: 1px solid #c8c8c8; background: #f0f0f0; }
.dlg-tools { height: 24px; display: flex; align-items: center; padding-left: 3px; background: linear-gradient(#fdfdfd, #f8f8f8 50%, #f1f1f1); font: 12px/16px "Open Sans", "Noto Sans", sans-serif; letter-spacing: -.2px; white-space: nowrap; }
.t-add { width: 123px; letter-spacing: -.36px; }
.dlg-tools .icon { margin-right: 8px; }
.t-regex { width: 44px; margin-left: 2px; }
.t-sigma { width: 47px; margin-left: 1px; }
.dlg-tools .t-sigma + .icon { margin-right: 6px; }
.t-prefix { width: 37px; }
.t-postfix { width: 43px; }
.t-box { width: 19px; height: 22px; background: #f1f1f1; margin-right: 5px; }
.tab { width: 46px; height: 22px; display: flex; align-items: center; padding-left: 7px; gap: 6px; background: #fff; border: 1px solid #8c8e94; border-bottom: 0; font-size: 12px; position: relative; z-index: 1; margin-bottom: -1px; }
.tabpage { width: 459px; height: 132px; border: 1px solid #8c8e94; background: #fcfcfc; padding: 4px 3px 0 6px; }
.maps { width: 447px; height: 95px; border: 1px solid #000; background: #ababab; padding: 1px; }
.map { width: 200px; height: 22px; display: flex; }
.map > span { width: 100px; height: 22px; background: #fff; border: solid #a0a0a0; border-width: 0 1px 1px 0; padding: 4px 0 0 3px; }
.map.head { height: 21px; }
.map.head > span { height: 21px; border-color: #e4e4e4; background: linear-gradient(#fff 40%, #f6f7f8); padding: 3px 0 0 8px; }
.map.sel > span:first-child { background: #3399ff; }
.map > .combo { padding: 1px; background: #f0f0f0; display: flex; }
.combo em { flex: 1; font-style: normal; border: 1px solid #707070; background: linear-gradient(#f2f2f2, #e8e8e8 48%, #d8d8d8 52%, #cecece); padding: 2px 0 0 1px; }
.combo b { width: 16px; border: 1px solid #707070; border-left: 0; background: linear-gradient(#f6f6f6, #dedede); display: flex; align-items: center; justify-content: center; }
.combo b::after { content: ""; border: 4px solid transparent; border-top-color: #000; border-bottom: 0; }
.maptools { height: 24px; margin-top: 4px; display: flex; align-items: center; gap: 7px; }
.testbtn { display: block; width: 136px; height: 21px; margin: 9px 0 7px 4px; padding: 0; border: 1px solid #707070; border-radius: 3px; background: linear-gradient(#f3f3f3, #ebebeb 48%, #dcdcdc 52%, #cfcfcf); font: 11px/14px "Liberation Sans", sans-serif; letter-spacing: -.25px; color: #111; }
.result { height: 198px; margin: 0 2px 0 3px; border: 1px solid #000; background: #ababab; }
```
FILE: app.js
```js
const icon = (name, cls = 'icon') => `<svg class="${cls}"><use href="#i-${name}"/></svg>`;
const box = on => `<span class="cb">${on ? '<svg><use href="#i-tick"/></svg>' : ''}</span>`;

// level|icon|checked|label|button
const tree = `0|globe|1|Event|
1|image|0|Image 1|plus
1|north|1|Coordinates WGS84|
1|north|0|Coordinates|
1|grid|0|Gauss-Krüger coordinates|
1|north|0|Coordinates PD|
1|map|0|Named area (DiversityGazetteer)|
1|mtb|0|MTB (A, CH, D)|
1|altitude|1|Altitude (mNN)|
1|depth|0|Depth|
1|height|0|Height|
1|slope|0|Slope|
1|expo|0|Exposition|
1|plot|0|Sampling plot|
1|map|0|2. Named area (DiversityGazetteer)|
1|map|0|3. Named area (DiversityGazetteer)|
1|map|0|4. Named area (DiversityGazetteer)|
1|map|0|5. Named area (DiversityGazetteer)|
1|strata|0|Chronostratigraphy|
1|strata|0|Lithostratigraphy|
1|strata|0|Biostratigraphy|
1|tree|0|Geographic regions|
1|tree|0|Lebensraumtypen (LfU)|
1|tree|0|Pflanzengesellschaften|
1|tree|0|European Nature Information System (EUNIS)|
1|tools|0|Method 1|plus
2|param|0|Parameter 1.1|plus
0|barcode|1|Specimen|
1|note|0|Annotation 1|plus
1|agent|1|Agent 1|plus
1|agent|1|Agent 2|
1|agent|1|Agent 3|minus
1|lock|1|Project 1|plus
1|relation|0|Relation 1|plus
1|part|1|Part 1|plus
2|pot|0|Processing 1.1|plus
2|trans|0|Transaction 1.1|plus
1|leaf|1|Organism 1|plus
2|ident|1|Identification 1.1|plus
2|caliper|0|Analysis 1.1|plus
3|tools|0|Method 1.1.1|plus
4|param|0|Parameter 1.1.1.1|plus
2|geo|0|Geoanalysis 1.1|plus
2|orgpart|0|Organism in part 1.1|plus
1|image|0|Image 1|plus
2|imgprop|0|Image property 1.1|plus`;
document.getElementById('tree').innerHTML = tree.split('\n').map(line => {
  const [level, ic, on, label, btn] = line.split('|');
  return `<div class="tree-row" style="padding-left:${4 + level * 15}px">${icon(ic)}${box(+on)}<span>${label}</span>${btn ? `<span class="btn">${icon(btn)}</span>` : ''}</div>`;
}).join('');

// name, kind (off / on / green / sub), number, button, for-all field, postfix, transform icon
const attrs = [
  ['IdentificationSequence', 'off', '', '', 'big'],
  ['VernacularTerm', 'off', '', 'plusg', 'big'],
  ['TaxonomicName', 'green', '4', 'plus', '', '_', 'tf'],
  ['', 'sub sub1', '5', 'minus', '', '_', 'tf'],
  ['', 'sub', '6', 'minus', '', '_', 'tf'],
  ['', 'sub', '7', 'minus', '', '', 'tf'],
  ['', 'sub', '3', 'minus', '', '', 'tfr'],
  ['NameURI', 'off', '', 'plusg', 'big'],
  ['IdentificationCategory', 'off', '', '', 'big cmb'],
  ['IdentificationQualifier', 'off', '', '', 'big cmb'],
  ['TypeStatus', 'on', '1', '', 'big cmb', '', 'tfr'],
  ['TypeNotes', 'off', '', 'plusg', 'big'],
  ['Notes', 'off', '', 'plusg', 'big'],
];
document.getElementById('attrs').innerHTML = attrs.map(([name, kind, num, btn, field, post = '', tf]) => {
  const off = kind === 'off', sub = kind.startsWith('sub'), green = kind === 'green', dim = off ? ' off' : '';
  return `<div class="attr ${off ? '' : 'on'} ${kind} ${green ? 'tax' : ''}">` +
    icon('quest', 'q') +
    (sub ? '<i></i><i></i><i></i><i></i><i></i>' :
      `${icon('key', 'q')}${box(!off)}<span class="name">${name}</span><span class="radio ${off ? '' : 'sel'}"></span><span class="t1">From file</span>`) +
    `<span class="btn${dim}${kind === 'on' ? ' focus' : ''}">${icon(off ? 'tfg' : tf)}</span>${icon('split', 'icon split')}` +
    `<span class="t2">Pre.:</span><span class="tin"></span><span class="t2">Post.:</span><span class="tin">${post}</span>` +
    `<span class="btn num${dim}${green ? ' green' : ''}">${off ? icon('comb') : num}</span>` +
    (btn ? `<span class="btn${dim}">${icon(btn)}</span>` : '<i></i>') +
    (field ? `<span class="radio${kind === 'on' ? ' en' : ''}"></span><span class="t1">For all:</span><span class="${field}"></span>` : '<i></i><i></i><i></i>') +
    (sub ? '' : icon('help', 'icon help')) + '</div>';
}).join('');

const heads = ['Identification 1.1\n  TaxonomicName', 'Identification 1.1\n  TaxonomicName', '', '', 'Identification 1.1\n\nResponsibleName',
  'Identification 1.1\n\nIdentificationDateSu', 'Event\n  CountryCache', 'Event\n\nLocalityDescription', 'Event\n\nLocalityDescription',
  '', '', 'Coordinates\nWGS84\n  Lat. (NS)', 'Coordinates\nWGS84\n  Long. (EW)'];
const wirth = ['Wirth & Striffler', '2005'], hub07 = ['Huber & El-Hennawy', '2007'];
const giza = ['Nita elsaff Huber & El-Hennawy', '', 'Huber', '2006', 'EGYPT', ''];
const cairo = [...hub07, ...giza, 'Cairo', "30°06.7'N", "31°17.8'E", '30,11167', '31'];
const namibia = ['Huber', '2000', 'Ninetis namibiae Huber', '', 'Huber', '2006', 'NAMIBIA', '', 'Etosha National Park', "19°02'S", "16°29'E", '-19,03333', '16'];
const kenya = ['', '', '', '', '', '', 'KENYA', 'Western Prov.', 'Kakamega Forest', "0°22'N", "34°50'E", '0,36667', '34'];
const thai = (species, place = '', ...coords) => [...wirth, species, '', ...wirth, 'THAILAND', '', place, ...coords];
const rows = [
  ['Author', 'Date descr.', '_Species', 'revision', 'Determined by', 'Date det.', 'Country', 'Admin.', 'Locality', 'Lat', 'Long', 'Lat_dec', 'Long_dec'],
  thai('Ornithoctonus aureotibialis', 'Bangkok', '~13.8 N', '~100.6 E', '13,8', '100'),
  thai('Ornithoctonus aureotibialis', 'Southern Thailand'),
  thai('Haplopelma longipes'), thai('Haplopelma longipes'),
  [...hub07, ...giza, 'El Saff, Giza', "29°57'N", "31°28'E", '29,95', '31'],
  cairo, cairo, cairo,
  [...hub07, 'Ninetis toliara Huber', '', 'Huber', '2006', 'MADAGASCAR', '', 'Isalo', "23°12'S", "45°05'E", '-23,2', '45'],
  namibia, namibia, namibia, namibia, kenya, kenya, kenya, kenya, kenya, kenya, kenya, kenya,
];
const esc = s => (s || '').replace(/&/g, '&amp;');
document.getElementById('data').innerHTML =
  '<colgroup><col style="width:36px">' + '<col style="width:100px">'.repeat(13) + '</colgroup>' +
  '<thead><tr><th></th>' + heads.map(h => `<th>${h}</th>`).join('') + '</tr></thead><tbody>' +
  rows.map((r, n) => `<tr><th${n ? '' : ' class="cur"'}>${n + 1}</th>` + heads.map((_, c) => `<td>${esc(r[c])}</td>`).join('') + '</tr>').join('') + '</tbody>';

// indent|icon|label|kind (m = main step, l = link, s = sub step)
const steps = `0|folder|File|l
0|clip|Attachment|l
0|merge|Merging|l
0|globe|Event|m
2|clock|Date and time|s
2|book|Reference|s
1|north|Coordinates WGS84|m
3|north|Geography|s
3|agent|Responsible|s
1|altitude|Altitude (mNN)|m
3|agent|Responsible|s
0|barcode|Specimen|m
2|label|Label|s
2|agent|Depositor|s
2|barcode|Accession|s
2|note|Notes|s
2|book|Reference|s
1|agent|Agent 1|m
1|agent|Agent 2|m
1|agent|Agent 3|m
1|lock|Project 1|m
1|part|Part 1|m
3|agent|Responsible|s
3|pot|Preparation|s
3|storage|Storage|s
1|leaf|Organism 1|m
3|note|Notes etc.|s
3|hier|Hierarchy, name|s
3|people|Relation|s
2|ident|Identification 1.1|m
4|book|Reference|s
4|agent|Responsible|s
4|clock|Date|s
0|test|Testing|l
0|import|Import|l`;
document.getElementById('steps').innerHTML = steps.split('\n').map(line => {
  const [indent, ic, label, kind] = line.split('|');
  return `<div class="step ${kind === 's' ? '' : 'main-step'} ${kind === 'l' ? 'link' : ''}" style="padding-left:${indent * 15}px">${icon(ic)}<span>${label}</span></div>`;
}).join('');
```
